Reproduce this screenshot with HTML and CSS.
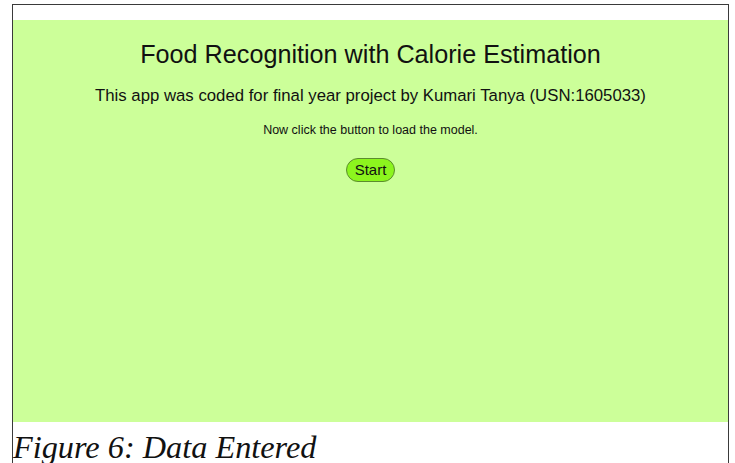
FILE: index.html
```html
<!DOCTYPE html>
<html lang="en">
<head>
<meta charset="utf-8">
<title>Food Recognition with Calorie Estimation</title>
<link rel="stylesheet" href="styles.css">
</head>
<body>
  <div class="sheet">
    <section class="app">
      <h1 class="app-title">Food Recognition with Calorie Estimation</h1>
      <p class="app-credit">This app was coded for final year project by Kumari Tanya (USN:1605033)</p>
      <p class="app-hint">Now click the button to load the model.</p>
      <button class="start-btn" type="button">Start</button>
    </section>
    <p class="caption">Figure 6: Data Entered</p>
  </div>
</body>
</html>
```

FILE: styles.css
```css
html, body {
  margin: 0;
  padding: 0;
  background: #ffffff;
  overflow: hidden;
  height: 463px;
}

body {
  padding: 4px 6px 0 12px;
  box-sizing: border-box;
}

.sheet {
  border: 1px solid #3a3a3a;
  border-bottom: none;
  padding-top: 15px;
  height: 480px;
  box-sizing: border-box;
}

.app {
  background: #ccff99;
  height: 402px;
  display: flex;
  flex-direction: column;
  align-items: center;
  font-family: "Liberation Sans", Arial, sans-serif;
  color: #111111;
}

.app-title {
  margin: 19px 0 0;
  font-size: 25.2px;
  font-weight: normal;
  line-height: 30px;
}

.app-credit {
  margin: 17px 0 0;
  font-size: 16.75px;
  line-height: 20px;
}

.app-hint {
  margin: 16px 0 0;
  font-size: 12.5px;
  line-height: 16px;
}

.start-btn {
  margin-top: 20px;
  font-family: "Liberation Sans", Arial, sans-serif;
  font-size: 15px;
  color: #111111;
  background: #8cf51e;
  border: 1px solid #5b8c2e;
  border-radius: 12px;
  padding: 2px 8px;
  height: 24px;
  line-height: 18px;
}

.caption {
  margin: 6px 0 0;
  font-family: "Liberation Serif", "Times New Roman", serif;
  font-style: italic;
  font-size: 32.3px;
  line-height: 38px;
  color: #111111;
}
```
